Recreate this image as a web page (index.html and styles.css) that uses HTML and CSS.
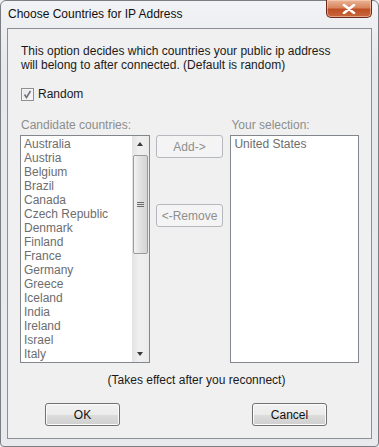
FILE: index.html
```html
<!DOCTYPE html>
<html lang="en">
  <head>
    <meta charset="UTF-8" />
    <title>Choose Countries for IP Address</title>
    <link rel="stylesheet" href="styles.css">
  </head>
  <body>
    <div class="window">
      <div class="titleBar">
        <span class="title">Choose Countries for IP Address</span>
        <div class="closeBtn">
          <svg width="14" height="10" viewBox="0 0 14 10">
            <path d="M2 1 L12 9 M12 1 L2 9" stroke="#fff" stroke-width="2.6" stroke-linecap="round" />
          </svg>
        </div>
      </div>
      <div class="client">
        <p class="desc">This option decides which countries your public ip address<br>will belong to after connected. (Default is random)</p>
        <label class="checkRow">
          <span class="checkBox">
            <svg width="9" height="9" viewBox="0 0 9 9">
              <path d="M1.5 4.5 L3.5 7.5 L7.5 1" stroke="#6c7078" stroke-width="1.5" fill="none" />
            </svg>
          </span>
          <span>Random</span>
        </label>
        <div class="lists">
          <div class="listCol leftCol">
            <div class="listLabel">Candidate countries:</div>
            <div class="listBox">
              <div class="items">
                <div>Australia</div>
                <div>Austria</div>
                <div>Belgium</div>
                <div>Brazil</div>
                <div>Canada</div>
                <div>Czech Republic</div>
                <div>Denmark</div>
                <div>Finland</div>
                <div>France</div>
                <div>Germany</div>
                <div>Greece</div>
                <div>Iceland</div>
                <div>India</div>
                <div>Ireland</div>
                <div>Israel</div>
                <div>Italy</div>
              </div>
              <div class="scrollBar">
                <div class="arrow up"></div>
                <div class="thumb"><span class="grip"></span></div>
                <div class="track"></div>
                <div class="arrow down"></div>
              </div>
            </div>
          </div>
          <div class="midCol">
            <button class="btn disabled addBtn">Add-&gt;</button>
            <button class="btn disabled removeBtn">&lt;-Remove</button>
          </div>
          <div class="listCol rightCol">
            <div class="listLabel">Your selection:</div>
            <div class="listBox">
              <div class="items">
                <div>United States</div>
              </div>
            </div>
          </div>
        </div>
        <p class="note">(Takes effect after you reconnect)</p>
        <div class="actions">
          <button class="btn okBtn">OK</button>
          <button class="btn cancelBtn">Cancel</button>
        </div>
      </div>
    </div>
  </body>
</html>
```

FILE: styles.css
```css
* {
  margin: 0;
  padding: 0;
  box-sizing: border-box;
}
body {
  background: #f0f0f0;
  font-family: "Liberation Sans", Arial, sans-serif;
  font-size: 12px;
  color: #1a1a1a;
}
.window {
  width: 379px;
  height: 447px;
  display: flex;
  flex-direction: column;
  padding: 0 6px 7px 6px;
  background: linear-gradient(#f2f3f5, #e6e9ec 60px, #e8eaed);
  border: 1px solid #7b7f84;
  border-radius: 6px 6px 4px 4px;
}
.titleBar {
  height: 27px;
  display: flex;
  align-items: flex-start;
  justify-content: space-between;
}
.title {
  margin-top: 6px;
  margin-left: 1px;
  line-height: 14px;
  color: #101010;
}
.closeBtn {
  width: 46px;
  height: 18px;
  margin-top: -1px;
  display: flex;
  align-items: center;
  justify-content: center;
  border: 1px solid #6c2a1f;
  border-top: none;
  border-radius: 0 0 5px 5px;
  background: linear-gradient(#eab596, #d9865e 45%, #bf4f24 55%, #c8683d);
  box-shadow: inset 0 0 0 1px rgba(255, 220, 200, 0.5);
}
.client {
  flex: 1;
  border: 1px solid #8c9096;
  background: #f0f0f0;
  padding: 15px 12px 0 12px;
  display: flex;
  flex-direction: column;
}
.desc {
  line-height: 14px;
  margin-left: 1px;
}
.checkRow {
  margin-top: 15px;
  display: flex;
  align-items: center;
  gap: 4px;
  line-height: 14px;
  margin-left: 1px;
}
.checkBox {
  width: 13px;
  height: 13px;
  border: 1px solid #8f8f8f;
  background: linear-gradient(135deg, #e4e4e4, #fbfbfb);
  box-shadow: inset 0 0 0 1px #f4f4f4;
  display: flex;
  align-items: center;
  justify-content: center;
}
.lists {
  margin-top: 17px;
  display: flex;
}
.listCol {
  display: flex;
  flex-direction: column;
}
.leftCol {
  width: 130px;
}
.rightCol {
  width: 129px;
}
.listLabel {
  line-height: 14px;
  color: #8d8d8d;
  margin-left: 1px;
  margin-bottom: 3px;
}
.listBox {
  height: 228px;
  border: 1px solid #82868d;
  background: #fff;
  display: flex;
  overflow: hidden;
}
.items {
  flex: 1;
  padding: 1px 0 0 3px;
  line-height: 14px;
  color: #6d6d6d;
  white-space: nowrap;
}
.scrollBar {
  width: 17px;
  display: flex;
  flex-direction: column;
  background: linear-gradient(to right, #e3e3e3, #f0f0f0 40%, #eaeaea);
}
.arrow {
  height: 17px;
  position: relative;
}
.arrow::after {
  content: "";
  position: absolute;
  left: 5px;
  border-left: 3.5px solid transparent;
  border-right: 3.5px solid transparent;
}
.arrow.up::after {
  top: 6px;
  border-bottom: 4px solid #3a3a3a;
}
.arrow.down::after {
  top: 7px;
  border-top: 4px solid #3a3a3a;
}
.thumb {
  height: 99px;
  margin: 2px 1px 0 1px;
  border: 1px solid #9a9a9a;
  border-radius: 2px;
  background: linear-gradient(to right, #f3f3f3, #e0e0e0 50%, #d4d4d4);
  display: flex;
  align-items: center;
  justify-content: center;
}
.grip {
  width: 7px;
  height: 5px;
  border-top: 1px solid #6a6a6a;
  border-bottom: 1px solid #6a6a6a;
  position: relative;
}
.grip::after {
  content: "";
  position: absolute;
  left: 0;
  right: 0;
  top: 1px;
  border-top: 1px solid #6a6a6a;
}
.track {
  flex: 1;
}
.midCol {
  width: 68px;
  margin: 17px 7px 0 6px;
  display: flex;
  flex-direction: column;
  gap: 46px;
}
.btn {
  height: 23px;
  font-family: "Liberation Sans", Arial, sans-serif;
  font-size: 12px;
  color: #111;
  border: 1px solid #707070;
  border-radius: 3px;
  background: linear-gradient(#f2f2f2, #ebebeb 50%, #dddddd 50%, #cfcfcf);
  box-shadow: inset 0 0 0 1px #fcfcfc;
}
.btn.disabled {
  color: #8e8e8e;
  border-color: #b5b9bd;
  background: #f4f4f4;
  box-shadow: none;
}
.note {
  margin-top: 10px;
  line-height: 14px;
  text-align: center;
  padding-left: 14px;
}
.actions {
  margin-top: 16px;
  display: flex;
  justify-content: space-between;
  padding: 0 32px 0 25px;
}
.okBtn,
.cancelBtn {
  width: 75px;
}
```
